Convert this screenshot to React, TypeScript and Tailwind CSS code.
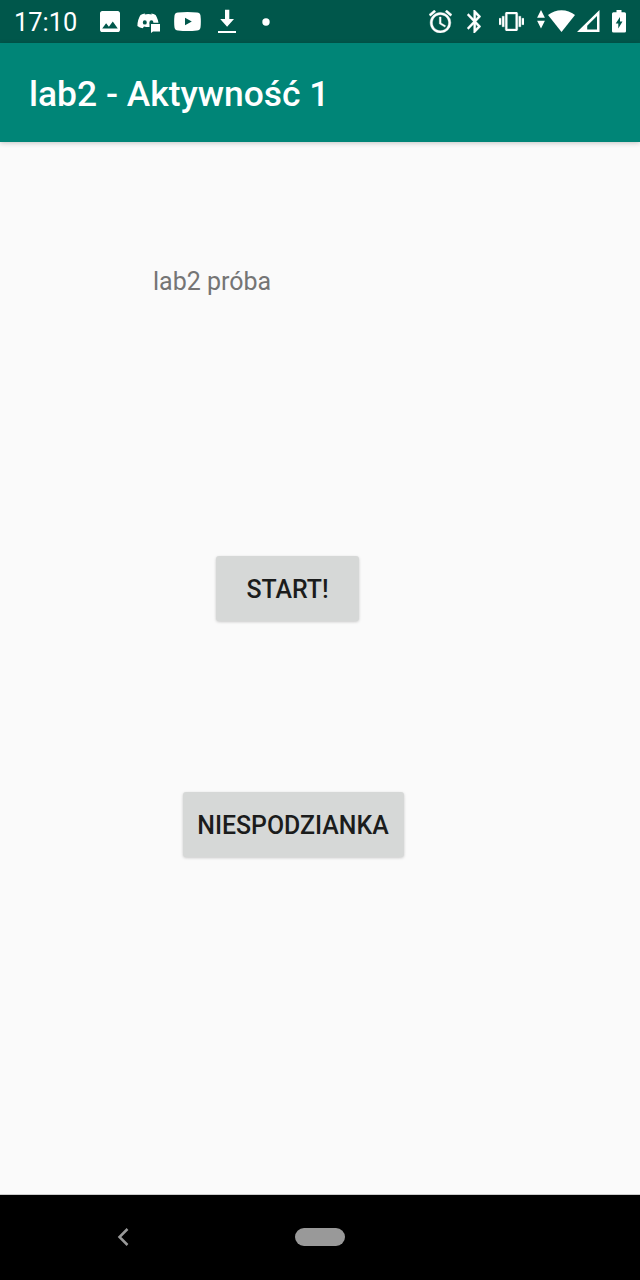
import type { ReactNode } from "react";

type IconProps = { viewBox: string; className: string; children: ReactNode };

function StatusIcon({ viewBox, className, children }: IconProps) {
  return (
    <svg viewBox={viewBox} preserveAspectRatio="none" fill="currentColor" className={`block shrink-0 ${className}`} aria-hidden="true">
      {children}
    </svg>
  );
}

function StatusBar() {
  return (
    <header className="flex h-[43px] shrink-0 items-start bg-[#00574b] text-white">
      <span className="ml-[14px] w-[64px] shrink-0 text-[25.4px] leading-[44px] whitespace-nowrap">17:10</span>

      <StatusIcon viewBox="3 3 18 18" className="mt-[11px] ml-[22px] h-[21px] w-[20px]">
        <path d="M21 19V5c0-1.1-.9-2-2-2H5c-1.1 0-2 .9-2 2v14c0 1.1.9 2 2 2h14c1.1 0 2-.9 2-2zM8.5 13.5l2.5 3.01L14.500 12l4.500 6H5l3.500-4.500z" />
      </StatusIcon>

      <StatusIcon viewBox="0 0 23 21" className="mt-[12px] ml-[17px] h-[21px] w-[23px]">
        <path
          fillRule="evenodd"
          d="M8.200 1.500L7.700 2.400Q11.300 1.800 14.800 2.400L14.200 1.500Q16.700 1.600 18.600 3Q21.700 7.800 21.700 14Q19.500 16 16.500 16.300L15.300 14.400Q11.300 15.400 7 14.400L5.700 16.300Q2.700 16 .4 14Q.4 7.800 3.500 3Q5.600 1.600 8.200 1.500ZM7.800 8.200A2 2.200 0 1 0 7.800 12.600A2 2.200 0 1 0 7.800 8.200ZM14.400 8.200A2 2.200 0 1 0 14.400 12.600A2 2.200 0 1 0 14.400 8.200Z"
        />
        <path d="M12.500 10.800H23V20H15l-2.500 1z" fill="#00574b" />
        <path d="M14 12h9v7.500h-7L14 21z" />
      </StatusIcon>

      <StatusIcon viewBox="0 0 27 19" className="mt-[12px] ml-[14px] h-[19px] w-[27px]">
        <path fillRule="evenodd" d="M4 .5Q13.500-.5 23 .5Q26 .7 26.500 3.500Q27.200 9.500 26.500 15.500Q26 18.300 23 18.500Q13.500 19.500 4 18.500Q1 18.300.5 15.500Q-.2 9.500.5 3.500Q1 .7 4 .5ZM11 5.700V13.300L17.800 9.500Z" />
      </StatusIcon>

      <StatusIcon viewBox="0 0 18 24" className="mt-[9px] ml-[17px] h-[24px] w-[18px]">
        <path d="M7 .7h4.300v9.300H16l-6.900 7.700L2.200 10H7zM0 22h18v2H0z" />
      </StatusIcon>

      <StatusIcon viewBox="0 0 8 8" className="mt-[17.500px] ml-[26px] h-[8px] w-[8px]">
        <circle cx="4" cy="4" r="3.700" />
      </StatusIcon>

      <StatusIcon viewBox="2 1.860 20 20.140" className="mt-[10px] ml-[159px] h-[23px] w-[23px]">
        <path
          stroke="currentColor"
          strokeWidth="0.350"
          d="M22 5.720l-4.600-3.860-1.290 1.530 4.600 3.860L22 5.720zM7.880 3.390L6.600 1.860 2 5.710l1.290 1.530 4.590-3.850zM12.500 8H11v6l4.750 2.850.75-1.230-4-2.370V8zM12 4c-4.970 0-9 4.030-9 9s4.020 9 9 9a9 9 0 0 0 0-18zm0 16c-3.870 0-7-3.130-7-7s3.130-7 7-7 7 3.130 7 7-3.130 7-7 7z"
        />
      </StatusIcon>

      <StatusIcon viewBox="5 2 12.710 20" className="mt-[10px] ml-[15px] h-[23px] w-[14px]">
        <path
          stroke="currentColor"
          strokeWidth="0.250"
          d="M17.710 7.710L12 2h-1v7.590L6.410 5 5 6.410 10.590 12 5 17.590 6.410 19 11 14.410V22h1l5.710-5.710-4.300-4.290 4.300-4.290zM13 5.830l1.880 1.880L13 9.590V5.830zm1.880 10.460L13 18.170v-3.760l1.880 1.880z"
        />
      </StatusIcon>

      <StatusIcon viewBox="0 3 24 18" className="mt-[12px] ml-[18px] h-[19px] w-[25px]">
        <path
          stroke="currentColor"
          strokeWidth="0.300"
          d="M0 15h2V9H0v6zm3 2h2V7H3v10zm19-8v6h2V9h-2zm-3 8h2V7h-2v10zM16.500 3h-9C6.670 3 6 3.670 6 4.500v15c0 .83.67 1.500 1.500 1.500h9c.83 0 1.500-.67 1.500-1.500v-15c0-.83-.67-1.500-1.500-1.500zM16 19H8V5h8v14z"
        />
      </StatusIcon>

      <StatusIcon viewBox="0 0 8 19" className="mt-[10px] ml-[13px] h-[19px] w-[8px]">
        <path d="M4 0l3.900 7.800H.1zM.1 10.700h7.800L4 18.500z" />
      </StatusIcon>

      <StatusIcon viewBox="0 0 27 22" className="mt-[10px] ml-[3px] h-[22px] w-[27px]">
        <path d="M0 5Q6 .3 13.500.3T27 5L13.500 22Z" />
      </StatusIcon>

      <StatusIcon viewBox="0 0 23 22" className="mt-[10px] ml-[2px] h-[22px] w-[23px]">
        <path fillRule="evenodd" d="M22.500 0V22H0ZM20 6L10.200 15.800V19.600H20Z" />
      </StatusIcon>

      <StatusIcon viewBox="0 0 14 23" className="mt-[10px] ml-[12px] h-[23px] w-[14px]">
        <path fillRule="evenodd" d="M4.500 0h5v2.300H12.500Q14 2.300 14 3.800V21.300Q14 22.500 12.500 22.500H1.500Q0 22.500 0 21.300V3.800Q0 2.300 1.500 2.300H4.500ZM8 7L3.700 13.600H6.300V18.500L10.500 11.500H8Z" />
      </StatusIcon>
    </header>
  );
}

function RaisedButton({ className, children }: { className: string; children: ReactNode }) {
  return (
    <button
      type="button"
      className={`flex h-[65px] shrink-0 items-center justify-center rounded-[3px] bg-[#d6d8d7] text-[24.900px] leading-[30px] font-medium whitespace-nowrap text-[#1b1c1c] shadow-[0_1px_3px_rgba(0,0,0,0.2)] ${className}`}
    >
      {children}
    </button>
  );
}

export default function App() {
  return (
    <div className="flex h-[1280px] w-[640px] flex-col overflow-hidden bg-[#fafafa] font-[Roboto,sans-serif]">
      <StatusBar />
      <div className="z-10 flex h-[99px] shrink-0 items-center bg-[#008577] pt-[2px] pl-[29px] text-white shadow-[0_1px_5px_rgba(0,0,0,0.22)]">
        <h1 className="text-[35.400px] leading-[42px] font-medium whitespace-nowrap">lab2 - Aktywność 1</h1>
      </div>
      <main className="flex min-h-0 flex-1 flex-col items-start">
        <p className="mt-[124px] ml-[153px] h-[32px] text-[25px] leading-[32px] whitespace-nowrap text-[#757575]">lab2 próba</p>
        <RaisedButton className="mt-[258px] ml-[216px] w-[143px] pt-[3px]">START!</RaisedButton>
        <RaisedButton className="mt-[171px] ml-[182.500px] w-[221px] pt-[2px]">NIESPODZIANKA</RaisedButton>
      </main>
      <nav className="flex h-[86px] shrink-0 items-center border-t border-[#cccccc] bg-black pb-px">
        <svg viewBox="0 0 12 20" className="ml-[117px] h-[20px] w-[12px] shrink-0" fill="none" stroke="#999999" strokeWidth="2.500" aria-hidden="true">
          <path d="M10.500 2L2.500 10l8 8" />
        </svg>
        <div className="ml-[166px] h-[18px] w-[50px] shrink-0 rounded-full bg-[#999999]" />
      </nav>
    </div>
  );
}
